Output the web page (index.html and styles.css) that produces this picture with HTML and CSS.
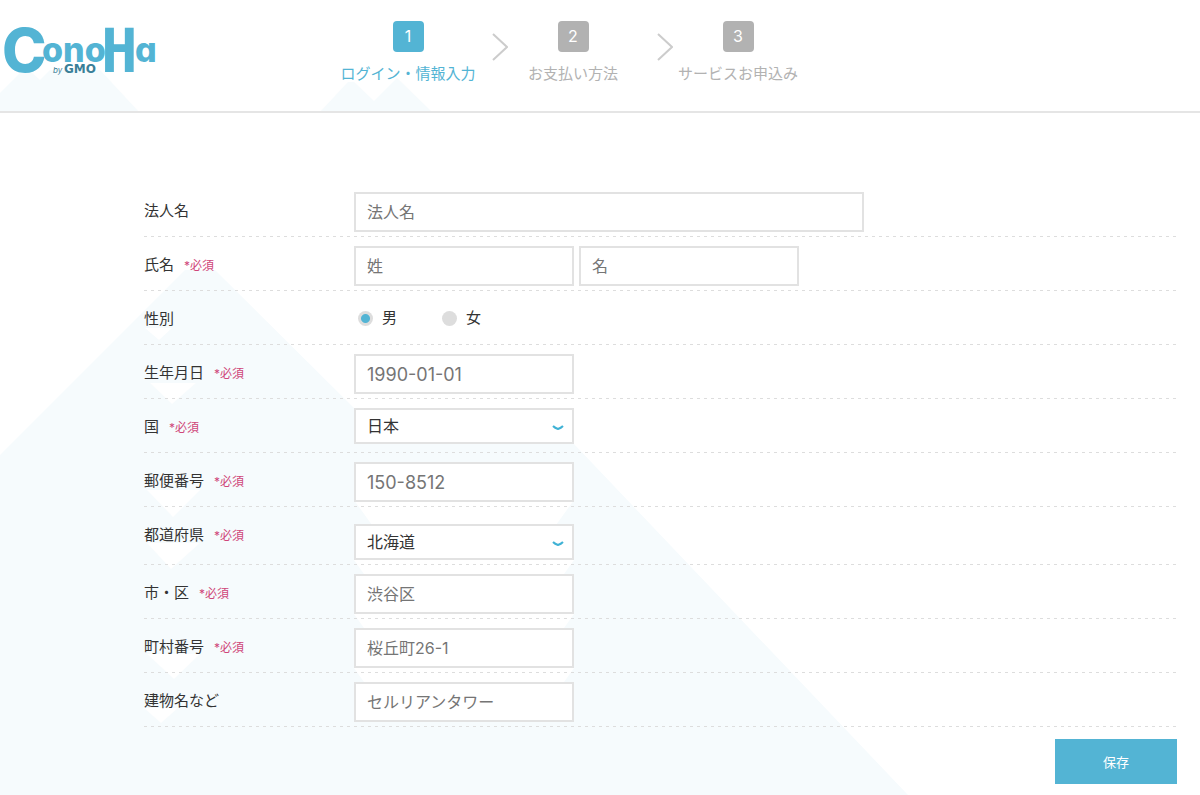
FILE: index.html
```html
<!DOCTYPE html>
<html lang="ja">
<head>
    <meta charset="UTF-8">
    <meta name="viewport" content="width=device-width, initial-scale=1.0">
    <title>ConoHa</title>
    <link rel="stylesheet" href="styles.css">
</head>
<body>

    <!-- mountains behind the page -->
    <svg class="mountains" viewBox="0 0 1200 795" preserveAspectRatio="xMinYMin meet" aria-hidden="true">
        <g fill="#f6fbfd">
            <polygon points="0,93 20,73 32,73 40,80 50,70 100,70 139,112 0,112"/>
            <polygon points="320,112 348,82 354,82 374,101 397,78 432,112"/>
            <polygon points="0,455 185,270 215,270 354,408 354,444 574,444 908,795 0,795"/>
        </g>
        <g fill="#fff">
            <polygon points="145,328 172,328 159,340"/>
            <polygon points="150,383 196,383 172,404"/>
            <polygon points="147,490 200,490 173,517"/>
            <polygon points="147,543 200,543 171,569"/>
            <polygon points="147,654 200,654 174,679"/>
            <polygon points="144,708 178,708 161,723"/>
            <polygon points="354,500 574,500 556,525 372,525"/>
            <polygon points="354,560 574,560 564,574 364,574"/>
            <polygon points="354,614 574,614 564,628 364,628"/>
            <polygon points="354,668 574,668 564,682 364,682"/>
        </g>
    </svg>

    <header class="header">
        <a href="#" class="logo" aria-label="ConoHa by GMO">
            <svg width="160" height="90" viewBox="0 0 160 90">
                <text class="logo-name"><tspan class="logo-c" x="2" y="72">C</tspan><tspan class="logo-small" x="42" y="62">ono</tspan><tspan class="logo-h" x="101" y="72">H</tspan><tspan class="logo-small" x="135" y="62">a</tspan></text>
                <text class="logo-by" x="53" y="73">by</text>
                <text class="logo-gmo" x="64" y="73">GMO</text>
            </svg>
        </a>
        <ol class="steps">
            <li class="step active">
                <span class="step-number">1</span>
                <span class="step-label">ログイン・情報入力</span>
            </li>
            <li class="arrow" aria-hidden="true">
                <svg width="16" height="28" viewBox="0 0 16 28"><path d="M1 1L15 14L1 27" fill="none" stroke="#ccc" stroke-width="2"/></svg>
            </li>
            <li class="step">
                <span class="step-number">2</span>
                <span class="step-label">お支払い方法</span>
            </li>
            <li class="arrow" aria-hidden="true">
                <svg width="16" height="28" viewBox="0 0 16 28"><path d="M1 1L15 14L1 27" fill="none" stroke="#ccc" stroke-width="2"/></svg>
            </li>
            <li class="step">
                <span class="step-number">3</span>
                <span class="step-label">サービスお申込み</span>
            </li>
        </ol>
    </header>

    <form class="form">
        <div class="row">
            <div class="title"><label for="company">法人名</label></div>
            <input type="text" id="company" class="wide" placeholder="法人名">
        </div>
        <div class="row">
            <div class="title"><label for="last-name">氏名</label><span class="required">*必須</span></div>
            <input type="text" id="last-name" placeholder="姓">
            <input type="text" id="first-name" placeholder="名" aria-label="名">
        </div>
        <div class="row" role="radiogroup" aria-labelledby="gender-title">
            <div class="title" id="gender-title">性別</div>
            <div class="radios">
                <label class="radio"><input type="radio" name="gender" value="male" checked>男</label>
                <label class="radio"><input type="radio" name="gender" value="female">女</label>
            </div>
        </div>
        <div class="row">
            <div class="title"><label for="birthday">生年月日</label><span class="required">*必須</span></div>
            <input type="text" id="birthday" class="number" placeholder="1990-01-01">
        </div>
        <div class="row">
            <div class="title"><label for="country">国</label><span class="required">*必須</span></div>
            <div class="select">
                <select id="country"><option>日本</option></select>
                <svg width="12" height="6" viewBox="0 0 12 6"><path d="M1 1Q3 3 6 4Q9 3 11 1" fill="none" stroke="#3fb2d5" stroke-width="2"/></svg>
            </div>
        </div>
        <div class="row">
            <div class="title"><label for="zip">郵便番号</label><span class="required">*必須</span></div>
            <input type="text" id="zip" class="number" placeholder="150-8512">
        </div>
        <div class="row row-prefecture">
            <div class="title"><label for="prefecture">都道府県</label><span class="required">*必須</span></div>
            <div class="select">
                <select id="prefecture"><option>北海道</option></select>
                <svg width="12" height="6" viewBox="0 0 12 6"><path d="M1 1Q3 3 6 4Q9 3 11 1" fill="none" stroke="#3fb2d5" stroke-width="2"/></svg>
            </div>
        </div>
        <div class="row">
            <div class="title"><label for="city">市・区</label><span class="required">*必須</span></div>
            <input type="text" id="city" placeholder="渋谷区">
        </div>
        <div class="row">
            <div class="title"><label for="street">町村番号</label><span class="required">*必須</span></div>
            <input type="text" id="street" placeholder="桜丘町26-1">
        </div>
        <div class="row">
            <div class="title"><label for="building">建物名など</label></div>
            <input type="text" id="building" placeholder="セルリアンタワー">
        </div>
        <div class="buttons">
            <button type="submit" class="save">保存</button>
        </div>
    </form>

</body>
</html>
```
FILE: styles.css
```css
* {
    box-sizing: border-box;
}

body {
    margin: 0;
    position: relative;
    font-family: Inter, "Noto Sans CJK JP", sans-serif;
    font-size: 15px;
    line-height: 20px;
    color: #333;
    background-color: #fff;
}

.mountains {
    position: absolute;
    top: 0;
    left: 0;
    width: 100%;
    z-index: -1;
}

/* header */
.header {
    display: flex;
    height: 113px;
    border-bottom: 2px solid #e5e5e5;
}

.logo {
    display: block;
    width: 160px;
    height: 90px;
}

.logo-name {
    fill: #53b4d4;
    font-weight: 800;
    font-feature-settings: "cv11";
}

.logo-c {
    font-size: 60px;
}

.logo-small {
    font-size: 34px;
}

.logo-h {
    font-family: "DejaVu Sans Mono", monospace;
    font-size: 61px;
}

.logo-by {
    fill: #3a7f98;
    font-size: 8px;
    font-style: italic;
}

.logo-gmo {
    fill: #3a7f98;
    font-family: "DejaVu Sans", sans-serif;
    font-size: 12px;
    font-weight: bold;
}

.steps {
    display: flex;
    list-style: none;
    margin: 0 0 0 183px;
    padding: 21px 0 0;
}

.step {
    display: flex;
    flex-direction: column;
    align-items: center;
    width: 130px;
    color: #b2b2b2;
}

.step-number {
    width: 31px;
    height: 31px;
    border-radius: 4px;
    background-color: #b2b2b2;
    color: #fff;
    font-size: 16px;
    line-height: 31px;
    text-align: center;
}

.step-label {
    margin-top: 12px;
    white-space: nowrap;
}

.active {
    color: #53b4d4;
}

.active .step-number {
    background-color: #53b4d4;
}

.arrow {
    width: 35px;
    padding: 12px 0 0 19px;
}

/* form */
.form {
    padding: 70px 23px 12px 12%;
}

.row {
    display: flex;
    align-items: flex-start;
    gap: 5px;
    min-height: 54px;
    padding: 9px 0 5px;
    background: repeating-linear-gradient(to right, #ddd 0 3px, transparent 3px 7px) left bottom / 100% 1px no-repeat;
}

.row-prefecture {
    padding-top: 17px;
}

.row-prefecture .title {
    margin-top: 1px;
}

.title {
    width: 205px;
    margin-top: 9px;
}

.required {
    margin-left: 10px;
    color: #cf4679;
    font-size: 12px;
}

input[type="text"],
select {
    width: 220px;
    height: 40px;
    padding: 0 11px;
    border: 2px solid #e2e2e2;
    border-radius: 0;
    background-color: #fff;
    color: #333;
    font-family: inherit;
    font-size: 16px;
}

input[type="text"].wide {
    width: 510px;
}

input[type="text"].number {
    font-size: 18px;
}

input::placeholder {
    color: #757575;
}

.select {
    position: relative;
}

select {
    display: block;
    height: 36px;
    appearance: none;
}

.select svg {
    position: absolute;
    top: 17px;
    right: 10px;
    pointer-events: none;
}

.radios {
    display: flex;
    gap: 45px;
    margin: 8px 0 0 4px;
}

.radio {
    display: flex;
    align-items: center;
    gap: 9px;
}

.radio input {
    appearance: none;
    width: 15px;
    height: 15px;
    margin: 0;
    border-radius: 50%;
    background-color: #ddd;
}

.radio input:checked {
    background: radial-gradient(circle, #53b4d4 0 4px, #ddd 5px);
}

.buttons {
    display: flex;
    justify-content: flex-end;
    margin-top: 12px;
}

.save {
    width: 122px;
    height: 45px;
    border: none;
    background-color: #53b4d4;
    color: #fff;
    font-family: inherit;
    font-size: 13px;
    cursor: pointer;
}
```
